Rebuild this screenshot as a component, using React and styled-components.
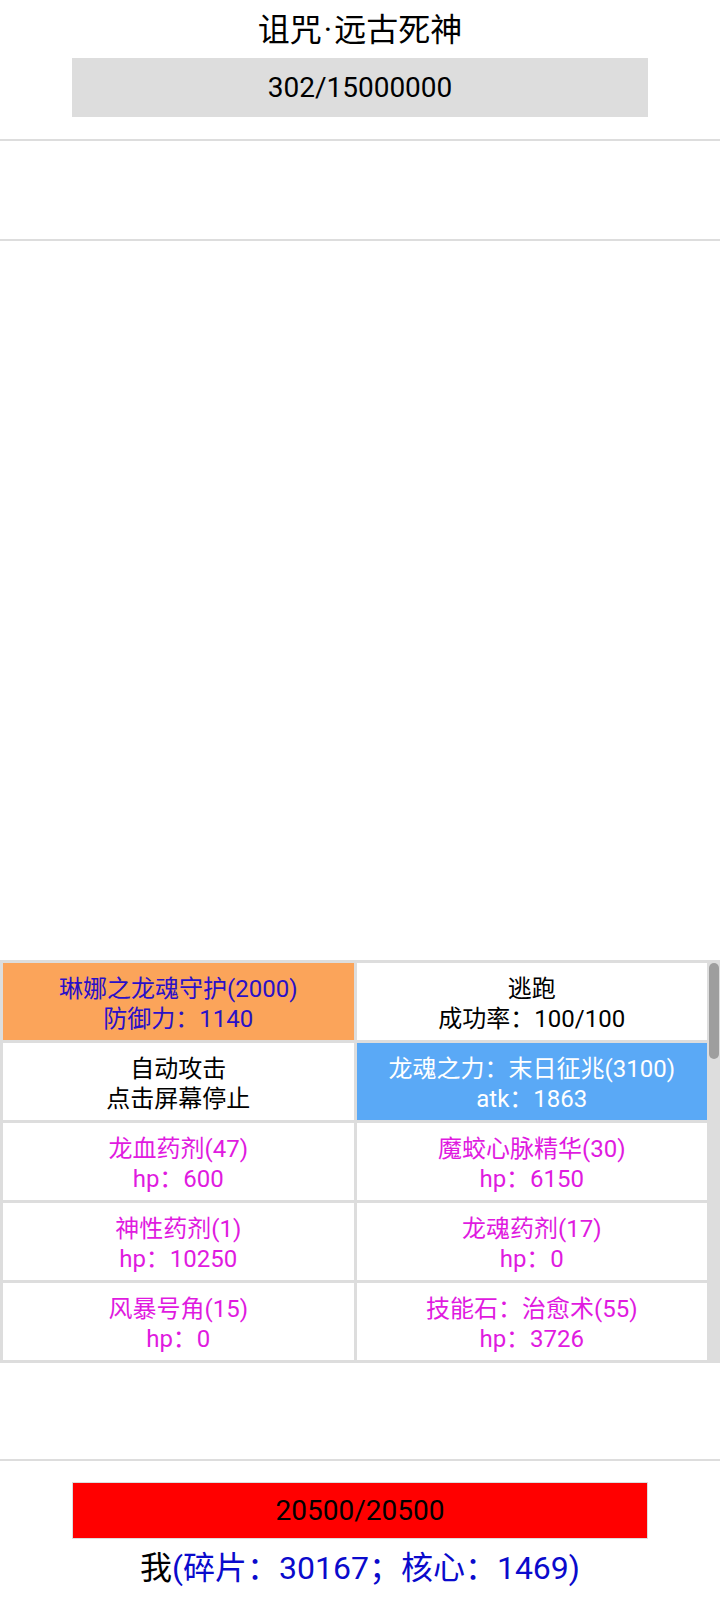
import React from 'react';
import styled, { createGlobalStyle } from 'styled-components';

const GlobalStyle = createGlobalStyle`
  html, body {
    margin: 0;
    padding: 0;
    background: #fff;
  }
  body {
    font-family: Roboto, "Noto Sans CJK SC", "Noto Sans", sans-serif;
    color: #000;
  }
`;

// 전체 화면
const Screen = styled.div`
  width: 720px;
  height: 1600px;
  display: flex;
  flex-direction: column;
  overflow: hidden;
`;

// 보스 정보
const BossHeader = styled.div`
  padding-top: 10px;
  display: flex;
  flex-direction: column;
  align-items: center;
`;
const BossName = styled.div`
  font-size: 32px;
  line-height: 40px;
`;
const NameDot = styled.span`
  margin: 0 2px;
`;
const HpBar = styled.div`
  width: 576px;
  height: ${(p) => p.$height}px;
  margin-top: ${(p) => p.$top}px;
  box-sizing: border-box;
  background: ${(p) => p.$color};
  border: ${(p) => (p.$bordered ? '1px solid #ddd' : 'none')};
  display: flex;
  align-items: center;
  justify-content: center;
  font-size: 28px;
`;

const Divider = styled.div`
  height: 2px;
  background: #ddd;
  margin-top: ${(p) => p.$top || 0}px;
`;
const LogArea = styled.div`
  height: 98px;
`;
const Arena = styled.div`
  flex: 1;
`;

// 행동 버튼 목록
const ActionPanel = styled.div`
  height: 403px;
  box-sizing: border-box;
  background: #ddd;
  padding: 3px 0 3px 3px;
  display: flex;
`;
const ActionGrid = styled.div`
  flex: 1;
  display: grid;
  grid-template-columns: 1fr 1fr;
  grid-auto-rows: 77px;
  gap: 3px;
`;
const ActionCell = styled.div`
  background: ${(p) => p.$bg || '#fff'};
  color: ${(p) => p.$color || '#000'};
  display: flex;
  flex-direction: column;
  align-items: center;
  justify-content: center;
  padding-top: 4px;
  box-sizing: border-box;
  font-size: 24px;
  line-height: 30px;
`;
const ScrollTrack = styled.div`
  width: 13px;
  padding: 0 1px 0 2px;
  box-sizing: border-box;
`;
const ScrollThumb = styled.div`
  height: 96px;
  border-radius: 5px;
  background: #9e9e9e;
`;

const BottomSpace = styled.div`
  height: 96px;
`;

// 플레이어 정보
const PlayerInfo = styled.div`
  display: flex;
  flex-direction: column;
  align-items: center;
  padding-bottom: 12px;
`;
const PlayerName = styled.div`
  margin-top: 9px;
  font-size: 32px;
  line-height: 40px;
`;
const Stats = styled.span`
  color: #0a0acc;
`;

const actions = [
  { title: '琳娜之龙魂守护(2000)', sub: '防御力：1140', bg: '#fba45a', color: '#2a10c8' },
  { title: '逃跑', sub: '成功率：100/100' },
  { title: '自动攻击', sub: '点击屏幕停止' },
  { title: '龙魂之力：末日征兆(3100)', sub: 'atk：1863', bg: '#5aa9f6', color: '#fff' },
  { title: '龙血药剂(47)', sub: 'hp：600', color: '#e01ae0' },
  { title: '魔蛟心脉精华(30)', sub: 'hp：6150', color: '#e01ae0' },
  { title: '神性药剂(1)', sub: 'hp：10250', color: '#e01ae0' },
  { title: '龙魂药剂(17)', sub: 'hp：0', color: '#e01ae0' },
  { title: '风暴号角(15)', sub: 'hp：0', color: '#e01ae0' },
  { title: '技能石：治愈术(55)', sub: 'hp：3726', color: '#e01ae0' },
];

export default function App() {
  return (
    <Screen>
      <GlobalStyle />
      <BossHeader>
        <BossName>
          诅咒<NameDot>·</NameDot>远古死神
        </BossName>
        <HpBar $color="#ddd" $height={59} $top={8}>302/15000000</HpBar>
      </BossHeader>
      <Divider $top={22} />
      <LogArea />
      <Divider />
      <Arena />
      <ActionPanel>
        <ActionGrid>
          {actions.map((a, i) => (
            <ActionCell key={i} $bg={a.bg} $color={a.color}>
              <div>{a.title}</div>
              <div>{a.sub}</div>
            </ActionCell>
          ))}
        </ActionGrid>
        <ScrollTrack>
          <ScrollThumb />
        </ScrollTrack>
      </ActionPanel>
      <BottomSpace />
      <Divider />
      <PlayerInfo>
        <HpBar $color="#ff0000" $height={57} $top={21} $bordered>20500/20500</HpBar>
        <PlayerName>
          我<Stats>(碎片：30167；核心：1469)</Stats>
        </PlayerName>
      </PlayerInfo>
    </Screen>
  );
}
